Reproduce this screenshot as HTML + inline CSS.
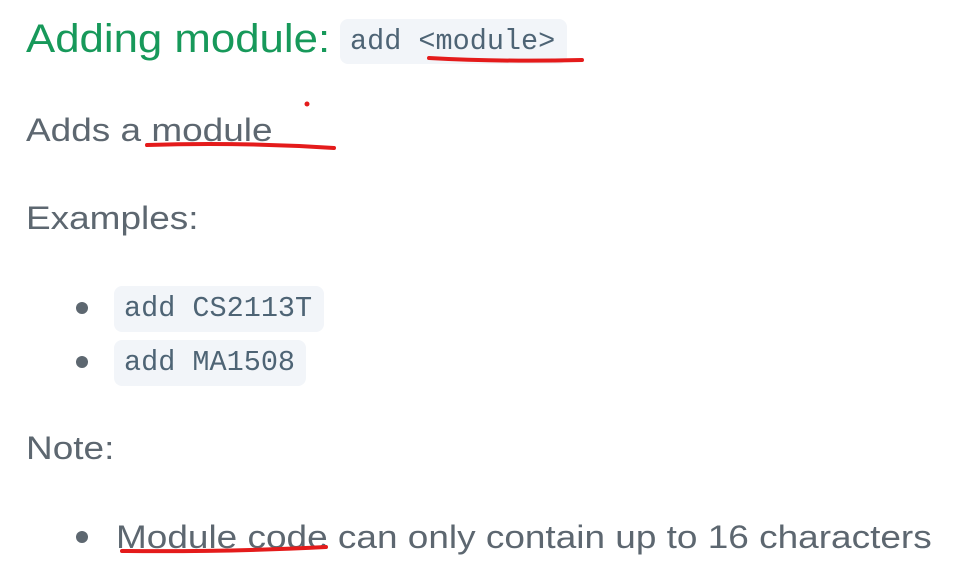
<!DOCTYPE html>
<html><head><meta charset="utf-8"><style>
body{margin:0;width:970px;height:586px;background:#fff;position:relative;overflow:hidden;font-family:"Liberation Sans",sans-serif;color:#5d6770}
.t{position:absolute;white-space:nowrap;font-size:32px;line-height:40px;transform:scaleX(1.155);transform-origin:0 0}
.code{position:absolute;background:#f2f5f9;border-radius:8px;font-family:"Liberation Mono",monospace;font-size:28.5px;color:#4e6475;line-height:46px;padding:0 10px;box-sizing:border-box;white-space:nowrap}
.dot{position:absolute;width:12px;height:12px;border-radius:50%;background:#5d6770}
</style></head><body>
<div class="t" style="left:26px;top:16px;font-size:40px;line-height:46px;color:#17995a;transform:scaleX(1.094)">Adding module:</div>
<div class="code" style="left:340px;top:19px;width:227px;height:45px">add &lt;module&gt;</div>
<div class="t" style="left:26px;top:110px">Adds a module</div>
<div class="t" style="left:26px;top:198px">Examples:</div>
<div class="dot" style="left:76px;top:302px"></div>
<div class="code" style="left:114px;top:286px;width:210px;height:46px">add CS2113T</div>
<div class="dot" style="left:76px;top:356px"></div>
<div class="code" style="left:114px;top:340px;width:192px;height:46px">add MA1508</div>
<div class="t" style="left:26px;top:428px">Note:</div>
<div class="dot" style="left:76px;top:531px"></div>
<div class="t" style="left:116px;top:517px">Module code can only contain up to 16 characters</div>
<svg width="970" height="586" style="position:absolute;left:0;top:0">
<g stroke="#e41b1b" stroke-width="4" stroke-linecap="round" fill="none">
<path d="M429 58 Q500 62 582 60"/>
<path d="M147 145 Q240 142 334 148"/>
<path d="M122 551 Q230 552 326 547"/>
</g>
<circle cx="307" cy="104" r="2.5" fill="#e41b1b"/>
</svg>
</body></html>
